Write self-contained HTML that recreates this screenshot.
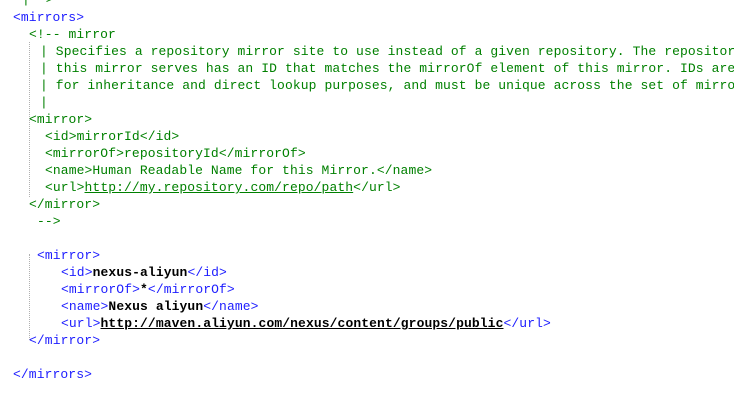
<!DOCTYPE html>
<html><head><style>
body{margin:0;width:734px;height:403px;background:#fff;overflow:hidden;position:relative;font-family:"Liberation Mono",monospace;font-size:13px;letter-spacing:0.1px}
.l{position:absolute;white-space:pre;line-height:17px;height:17px}
.t{color:#1c1cff}
.c{color:#008000}
.b{color:#000;font-weight:bold}
.u{text-decoration:underline}
.g{position:absolute;width:0;border-left:1px dotted #b0b0b0}
</style></head><body>
<div class="g" style="left:29px;top:42px;height:155px"></div>
<div class="g" style="left:29px;top:254px;height:86px"></div>
<div class="l c" style="left:22px;top:-9px">|--&gt;</div>
<div class="l t" style="left:13px;top:9px">&lt;mirrors&gt;</div>
<div class="l c" style="left:29px;top:26px">&lt;!-- mirror</div>
<div class="l c" style="left:40px;top:43px">| Specifies a repository mirror site to use instead of a given repository. The repositor</div>
<div class="l c" style="left:40px;top:60px">| this mirror serves has an ID that matches the mirrorOf element of this mirror. IDs are</div>
<div class="l c" style="left:40px;top:77px">| for inheritance and direct lookup purposes, and must be unique across the set of mirro</div>
<div class="l c" style="left:40px;top:94px">|</div>
<div class="l c" style="left:29px;top:111px">&lt;mirror&gt;</div>
<div class="l c" style="left:45px;top:128px">&lt;id&gt;mirrorId&lt;/id&gt;</div>
<div class="l c" style="left:45px;top:145px">&lt;mirrorOf&gt;repositoryId&lt;/mirrorOf&gt;</div>
<div class="l c" style="left:45px;top:162px">&lt;name&gt;Human Readable Name for this Mirror.&lt;/name&gt;</div>
<div class="l c" style="left:45px;top:179px">&lt;url&gt;<span class="u">http://my.repository.com/repo/path</span>&lt;/url&gt;</div>
<div class="l c" style="left:29px;top:196px">&lt;/mirror&gt;</div>
<div class="l c" style="left:37px;top:213px">--&gt;</div>
<div class="l t" style="left:37px;top:247px">&lt;mirror&gt;</div>
<div class="l t" style="left:61px;top:264px">&lt;id&gt;<span class="b">nexus-aliyun</span>&lt;/id&gt;</div>
<div class="l t" style="left:61px;top:281px">&lt;mirrorOf&gt;<span class="b">*</span>&lt;/mirrorOf&gt;</div>
<div class="l t" style="left:61px;top:298px">&lt;name&gt;<span class="b">Nexus aliyun</span>&lt;/name&gt;</div>
<div class="l t" style="left:61px;top:315px">&lt;url&gt;<span class="b u">http://maven.aliyun.com/nexus/content/groups/public</span>&lt;/url&gt;</div>
<div class="l t" style="left:29px;top:332px">&lt;/mirror&gt;</div>
<div class="l t" style="left:13px;top:366px">&lt;/mirrors&gt;</div>
</body></html>
